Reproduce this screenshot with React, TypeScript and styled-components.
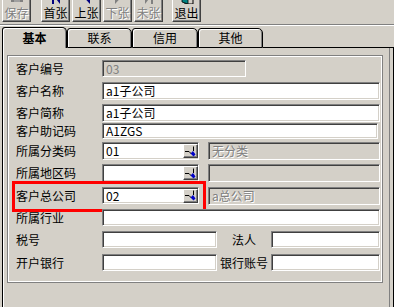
import React from 'react';
import styled, { createGlobalStyle } from 'styled-components';

const GlobalStyle = createGlobalStyle`
  html, body { margin: 0; padding: 0; background: #d4d0c8; }
  body {
    font-family: "Noto Sans CJK SC", "Noto Sans", sans-serif;
    font-size: 12px;
    color: #000;
  }
  * { box-sizing: border-box; }
`;

const Window = styled.div`
  width: 394px;
  height: 307px;
  background: #d4d0c8;
  display: flex;
  flex-direction: column;
  overflow: hidden;
`;

const Toolbar = styled.div`
  height: 22px;
  flex-shrink: 0;
  display: flex;
  align-items: flex-end;
  padding-left: 2px;
  overflow: hidden;
`;

const ToolButton = styled.div<{ $gap: number; $disabled?: boolean }>`
  width: 29px;
  height: 37px;
  flex-shrink: 0;
  margin-left: ${(p) => p.$gap}px;
  background: #d4d0c8;
  border: 1px solid;
  border-color: #fff #404040 #404040 #fff;
  box-shadow: inset -1px -1px 0 #808080;
  display: flex;
  flex-direction: column;
  align-items: center;
  justify-content: flex-end;
  padding-bottom: 2px;
  font-size: 12px;
  line-height: 12px;
  color: ${(p) => (p.$disabled ? '#808080' : '#000')};
  text-shadow: ${(p) => (p.$disabled ? '1px 1px 0 #fff' : 'none')};
  svg { margin-bottom: 3px; display: block; }
`;

const Etch = styled.div`
  flex-shrink: 0;
  margin-top: 2px;
  border-top: 1px solid #808080;
  border-bottom: 1px solid #fff;
`;

const TabStrip = styled.div`
  flex-shrink: 0;
  margin-top: 1px;
  height: 21px;
  display: flex;
  align-items: flex-end;
  padding-left: 2px;
`;

const Tab = styled.div<{ $w: number; $active?: boolean }>`
  width: ${(p) => p.$w}px;
  height: ${(p) => (p.$active ? 21 : 20)}px;
  flex-shrink: 0;
  display: flex;
  align-items: center;
  justify-content: center;
  border: 1px solid #000;
  border-bottom: ${(p) => (p.$active ? 'none' : '1px solid #000')};
  border-radius: 3px 5px 0 0;
  box-shadow: inset 1px 1px 0 #fff, inset -1px 0 0 #808080;
  font-weight: ${(p) => (p.$active ? 700 : 400)};
  padding-bottom: ${(p) => (p.$active ? 1 : 0)}px;
  line-height: 14px;
`;

const TabFiller = styled.div`
  flex: 1;
  height: 1px;
  background: #000;
`;

const Page = styled.div`
  flex: 1;
  margin-left: 2px;
  border-left: 1px solid #000;
  border-right: 1px solid #000;
  box-shadow: inset 1px 0 0 #fff, inset -3px 0 0 #d4d0c8, inset -4px 0 0 #808080;
  padding: 7px 0 0 4px;
`;

const GroupBox = styled.div`
  width: 376px;
  height: 228px;
  border: 1px solid #808080;
  box-shadow: inset 1px 1px 0 #fff, inset -1px -1px 0 #fff;
  padding: 4px 0 0 8px;
  display: flex;
  flex-direction: column;
`;

const Row = styled.div<{ $h: number }>`
  position: relative;
  height: ${(p) => p.$h}px;
  flex-shrink: 0;
  display: flex;
  align-items: flex-start;
`;

const Label = styled.div<{ $h: number }>`
  width: 86px;
  flex-shrink: 0;
  height: ${(p) => p.$h}px;
  line-height: ${(p) => p.$h}px;
  white-space: nowrap;
`;

const MidLabel = styled.div<{ $h: number }>`
  width: 54px;
  flex-shrink: 0;
  height: ${(p) => p.$h}px;
  line-height: ${(p) => p.$h}px;
  text-align: center;
  white-space: nowrap;
`;

const Field = styled.div<{ $w: number; $h: number; $ro?: boolean; $emboss?: boolean; $ml?: number }>`
  width: ${(p) => p.$w}px;
  height: ${(p) => p.$h}px;
  margin-left: ${(p) => p.$ml ?? 0}px;
  flex-shrink: 0;
  display: flex;
  align-items: center;
  background: ${(p) => (p.$ro ? '#d4d0c8' : '#fff')};
  border: 1px solid;
  border-color: #808080 #fff #fff #808080;
  box-shadow: inset 1px 1px 0 #404040, inset -1px -1px 0 #d4d0c8;
  padding: 0 1px 0 3px;
  color: ${(p) => (p.$ro ? '#808080' : '#000')};
  text-shadow: ${(p) => (p.$emboss ? '1px 1px 0 #fff' : 'none')};
  white-space: nowrap;
  line-height: 14px;
`;

const FieldText = styled.span`
  flex: 1;
  line-height: 14px;
`;

const LookupButton = styled.div`
  width: 15px;
  height: 14px;
  flex-shrink: 0;
  background: #d4d0c8;
  border: 1px solid;
  border-color: #fff #404040 #404040 #fff;
  box-shadow: inset -1px -1px 0 #808080;
  display: flex;
  align-items: center;
  justify-content: center;
  margin-right: -1px;
`;

const Highlight = styled.div`
  position: absolute;
  left: -4px;
  top: -6px;
  width: 194px;
  height: 31px;
  border: 3px solid #f00;
  pointer-events: none;
`;

const PickIcon = () => (
  <svg width="11" height="11" viewBox="0 0 11 11">
    <path d="M0 5.5H4L6.5 8" stroke="#000" strokeWidth="1" fill="none" />
    <path d="M8.5 0.5V5" stroke="#000" strokeWidth="1" fill="none" />
    <path d="M5.5 7.5L8 5L10.5 8.5L8.5 10.5Z" fill="#0000c8" />
  </svg>
);

const Lookup = ({ value, h }: { value: string; h: number }) => (
  <Field $w={97} $h={h}>
    <FieldText>{value}</FieldText>
    <LookupButton>
      <PickIcon />
    </LookupButton>
  </Field>
);

const FloppyIcon = () => (
  <svg width="16" height="16" viewBox="0 0 16 16">
    <rect x="2" y="2" width="12" height="12" fill="#808080" />
    <rect x="4" y="2" width="8" height="5" fill="#fff" />
    <rect x="5" y="10" width="6" height="4" fill="#a0a0a0" />
  </svg>
);

const FirstIcon = () => (
  <svg width="16" height="16" viewBox="0 0 16 16">
    <rect x="4" y="3" width="2" height="13" fill="#000080" />
    <path d="M12 3L7 9.5L12 16Z" fill="#000080" />
  </svg>
);

const PrevIcon = () => (
  <svg width="16" height="16" viewBox="0 0 16 16">
    <path d="M11 3L5 9.5L11 16Z" fill="#000080" />
  </svg>
);

const NextIcon = () => (
  <svg width="16" height="16" viewBox="0 0 16 16">
    <path d="M5 3L11 9.5L5 16Z" fill="#808080" />
  </svg>
);

const LastIcon = () => (
  <svg width="16" height="16" viewBox="0 0 16 16">
    <path d="M4 3L9 9.5L4 16Z" fill="#808080" />
    <rect x="10" y="3" width="2" height="13" fill="#808080" />
  </svg>
);

const ExitIcon = () => (
  <svg width="16" height="16" viewBox="0 0 16 16">
    <rect x="6" y="1" width="8" height="15" fill="none" stroke="#000" strokeWidth="1" />
    <path d="M3 3L9 1V16L3 14Z" fill="#008080" stroke="#000" strokeWidth="0.8" />
  </svg>
);

export default function App() {
  return (
    <>
      <GlobalStyle />
      <Window>
        <Toolbar>
          <ToolButton $gap={0} $disabled>
            <FloppyIcon />
            保存
          </ToolButton>
          <ToolButton $gap={10}>
            <FirstIcon />
            首张
          </ToolButton>
          <ToolButton $gap={2}>
            <PrevIcon />
            上张
          </ToolButton>
          <ToolButton $gap={2} $disabled>
            <NextIcon />
            下张
          </ToolButton>
          <ToolButton $gap={2} $disabled>
            <LastIcon />
            未张
          </ToolButton>
          <ToolButton $gap={9}>
            <ExitIcon />
            退出
          </ToolButton>
        </Toolbar>
        <Etch />
        <TabStrip>
          <Tab $w={65} $active>基本</Tab>
          <Tab $w={65}>联系</Tab>
          <Tab $w={66}>信用</Tab>
          <Tab $w={65}>其他</Tab>
          <TabFiller />
        </TabStrip>
        <Page>
          <GroupBox>
            <Row $h={22}>
              <Label $h={17}>客户编号</Label>
              <Field $w={144} $h={17} $ro>03</Field>
            </Row>
            <Row $h={22}>
              <Label $h={18}>客户名称</Label>
              <Field $w={278} $h={18}>a1子公司</Field>
            </Row>
            <Row $h={19}>
              <Label $h={18}>客户简称</Label>
              <Field $w={278} $h={18}>a1子公司</Field>
            </Row>
            <Row $h={19}>
              <Label $h={16}>客户助记码</Label>
              <Field $w={276} $h={16}>A1ZGS</Field>
            </Row>
            <Row $h={22}>
              <Label $h={18}>所属分类码</Label>
              <Lookup value="01" h={18} />
              <Field $w={172} $h={18} $ml={9} $ro $emboss>无分类</Field>
            </Row>
            <Row $h={23}>
              <Label $h={18}>所属地区码</Label>
              <Lookup value="" h={18} />
              <Field $w={172} $h={18} $ml={9} $ro $emboss></Field>
            </Row>
            <Row $h={22}>
              <Label $h={17}>客户总公司</Label>
              <Lookup value="02" h={17} />
              <Field $w={172} $h={18} $ml={9} $ro $emboss>a总公司</Field>
              <Highlight />
            </Row>
            <Row $h={22}>
              <Label $h={17}>所属行业</Label>
              <Field $w={278} $h={17}></Field>
            </Row>
            <Row $h={23}>
              <Label $h={17}>税号</Label>
              <Field $w={115} $h={17}></Field>
              <MidLabel $h={17}>法人</MidLabel>
              <Field $w={109} $h={17}></Field>
            </Row>
            <Row $h={17}>
              <Label $h={17}>开户银行</Label>
              <Field $w={115} $h={17}></Field>
              <MidLabel $h={17}>银行账号</MidLabel>
              <Field $w={109} $h={17}></Field>
            </Row>
          </GroupBox>
        </Page>
      </Window>
    </>
  );
}
